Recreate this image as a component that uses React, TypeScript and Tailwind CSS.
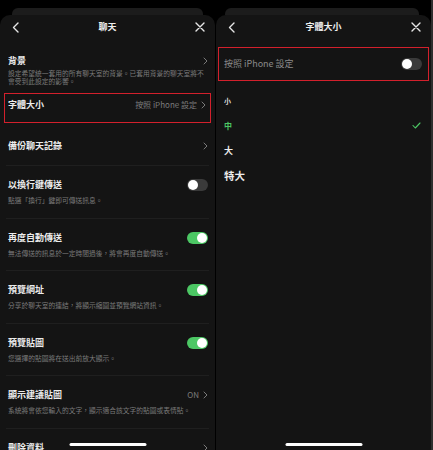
import React from "react";

const GREEN = "#4cc764";

function Back() {
  return (
    <svg width="7" height="11" viewBox="0 0 7 11" fill="none">
      <path d="M6 1L1.5 5.5L6 10" stroke="#e6e6e6" strokeWidth="1.4" strokeLinecap="round" strokeLinejoin="round" />
    </svg>
  );
}

function Close() {
  return (
    <svg width="10" height="10" viewBox="0 0 10 10" fill="none">
      <path d="M1 1L9 9M9 1L1 9" stroke="#e6e6e6" strokeWidth="1.4" strokeLinecap="round" />
    </svg>
  );
}

function Chevron() {
  return (
    <svg width="5" height="8" viewBox="0 0 5 8" fill="none">
      <path d="M1 1L4 4L1 7" stroke="#7a7a7a" strokeWidth="1" strokeLinecap="round" strokeLinejoin="round" />
    </svg>
  );
}

function Toggle({ on }: { on: boolean }) {
  return (
    <div
      className={`w-[21px] h-[12px] rounded-full flex items-center px-[1px] ${on ? "bg-[#4cc764] justify-end" : "bg-[#3a3a3a] justify-start"}`}
    >
      <div className="w-[10px] h-[10px] rounded-full bg-white" />
    </div>
  );
}

function Header({ title }: { title: string }) {
  return (
    <div className="h-[24px] flex items-center justify-between pl-[12px] pr-[10px] relative">
      <Back />
      <div className="absolute left-0 right-0 text-center text-[9px] font-bold text-[#eeeeee] leading-[12px] pointer-events-none">
        {title}
      </div>
      <Close />
    </div>
  );
}

function Group({
  title,
  desc,
  right,
}: {
  title: string;
  desc?: string;
  right: React.ReactNode;
}) {
  return (
    <div className="h-[52.6px] flex flex-col *:shrink-0">
      <div className="h-[1px] bg-[#1f1f1f] mx-[6px]" />
      <div className="pt-[13px] pl-[8px] pr-[7px] flex items-center justify-between h-[25px]">
        <span className="text-[9px] leading-[12px] font-bold text-[#ececec]">{title}</span>
        {right}
      </div>
      {desc && (
        <div className="mt-[4px] pl-[8px] text-[6.75px] leading-[10px] text-[#7b7b7b] whitespace-nowrap">{desc}</div>
      )}
    </div>
  );
}

function HomeBar() {
  return <div className="absolute bottom-[4px] left-1/2 -translate-x-1/2 w-[77px] h-[3px] rounded-full bg-white" />;
}

export default function App() {
  return (
    <div
      className="w-[433px] h-[450px] bg-black flex overflow-hidden"
      style={{ fontFamily: '"Noto Sans CJK TC", "Noto Sans", sans-serif' }}
    >
      {/* Left panel */}
      <div className="w-[215px] flex flex-col shrink-0">
        <div className="h-[15px] shrink-0 flex items-end px-[12px]">
          <div className="w-full h-[7px] bg-[#1c1c1c] rounded-t-[6px]" />
        </div>
        <div className="flex-1 bg-[#141414] rounded-t-[10px] relative overflow-hidden flex flex-col *:shrink-0">
          <Header title="聊天" />
          <div className="pt-[16px] pl-[8px] pr-[7px] flex items-center justify-between h-[28px]">
            <span className="text-[9px] leading-[12px] font-bold text-[#ececec]">背景</span>
            <Chevron />
          </div>
          <div className="mt-[2px] pl-[8px] pr-[6px] text-[6.75px] leading-[8px] text-[#7b7b7b]">
            設定希望統一套用的所有聊天室的背景。已套用背景的聊天室將不會受到此設定的影響。
          </div>
          <div className="mt-[8px] mx-[4px] h-[30px] border-[1.5px] border-[#d3202c] pl-[3px] pr-[4px] pt-[4.5px]">
            <div className="flex items-center justify-between h-[12px]">
              <span className="text-[9px] leading-[12px] font-bold text-[#ececec]">字體大小</span>
              <div className="flex items-center gap-[4px]">
                <span className="text-[8px] leading-[12px] text-[#7b7b7b]">按照 iPhone 設定</span>
                <Chevron />
              </div>
            </div>
          </div>
          <div className="mt-[17px] pl-[8px] pr-[7px] flex items-center justify-between h-[12px]">
            <span className="text-[9px] leading-[12px] font-bold text-[#ececec]">備份聊天記錄</span>
            <Chevron />
          </div>
          <div className="h-[13px]" />
          <Group title="以換行鍵傳送" desc="點選「換行」鍵即可傳送訊息。" right={<Toggle on={false} />} />
          <Group title="再度自動傳送" desc="無法傳送的訊息於一定時間過後，將會再度自動傳送。" right={<Toggle on />} />
          <Group title="預覽網址" desc="分享於聊天室的連結，將顯示縮圖並預覽網站資訊。" right={<Toggle on />} />
          <Group title="預覽貼圖" desc="您選擇的貼圖將在送出前放大顯示。" right={<Toggle on />} />
          <Group
            title="顯示建議貼圖"
            desc="系統將會依您輸入的文字，顯示適合該文字的貼圖或表情貼。"
            right={
              <div className="flex items-center gap-[4px]">
                <span className="text-[8px] leading-[12px] text-[#7b7b7b]">ON</span>
                <Chevron />
              </div>
            }
          />
          <Group title="刪除資料" right={<Chevron />} />
          <HomeBar />
        </div>
      </div>

      <div className="w-[1px] shrink-0" />

      {/* Right panel */}
      <div className="w-[215px] flex flex-col shrink-0">
        <div className="h-[15px] shrink-0 flex items-end pl-[9px] pr-[12px]">
          <div className="w-full h-[7px] bg-[#1c1c1c] rounded-t-[6px]" />
        </div>
        <div className="flex-1 bg-[#141414] rounded-t-[10px] relative overflow-hidden flex flex-col *:shrink-0">
          <Header title="字體大小" />
          <div className="mt-[8px] mx-[2px] h-[34px] border-[1.5px] border-[#d3202c] pl-[5px] pr-[6px] flex items-center justify-between">
            <span className="text-[9px] leading-[12px] text-[#8a8a8a]">按照 iPhone 設定</span>
            <Toggle on={false} />
          </div>
          <div className="h-[7px]" />
          <div className="h-[25px] flex items-center pl-[8px] pr-[12px]">
            <span className="text-[7px] leading-[10px] font-bold text-[#dcdcdc]">小</span>
          </div>
          <div className="h-[25px] flex items-center justify-between pl-[8px] pr-[10px]">
            <span className="text-[8px] leading-[10px] font-bold" style={{ color: GREEN }}>中</span>
            <svg width="9" height="7" viewBox="0 0 9 7" fill="none">
              <path d="M1 3.5L3.3 6L8 1" stroke={GREEN} strokeWidth="1.1" strokeLinecap="round" strokeLinejoin="round" />
            </svg>
          </div>
          <div className="h-[25px] flex items-center pl-[8px]">
            <span className="text-[9px] leading-[12px] font-bold text-[#ececec]">大</span>
          </div>
          <div className="h-[25px] flex items-center pl-[8px]">
            <span className="text-[10.5px] leading-[13px] font-bold text-[#ececec]">特大</span>
          </div>
          <HomeBar />
        </div>
      </div>
      <div className="w-[2px] shrink-0 bg-[#2e2e2e]" />
    </div>
  );
}
